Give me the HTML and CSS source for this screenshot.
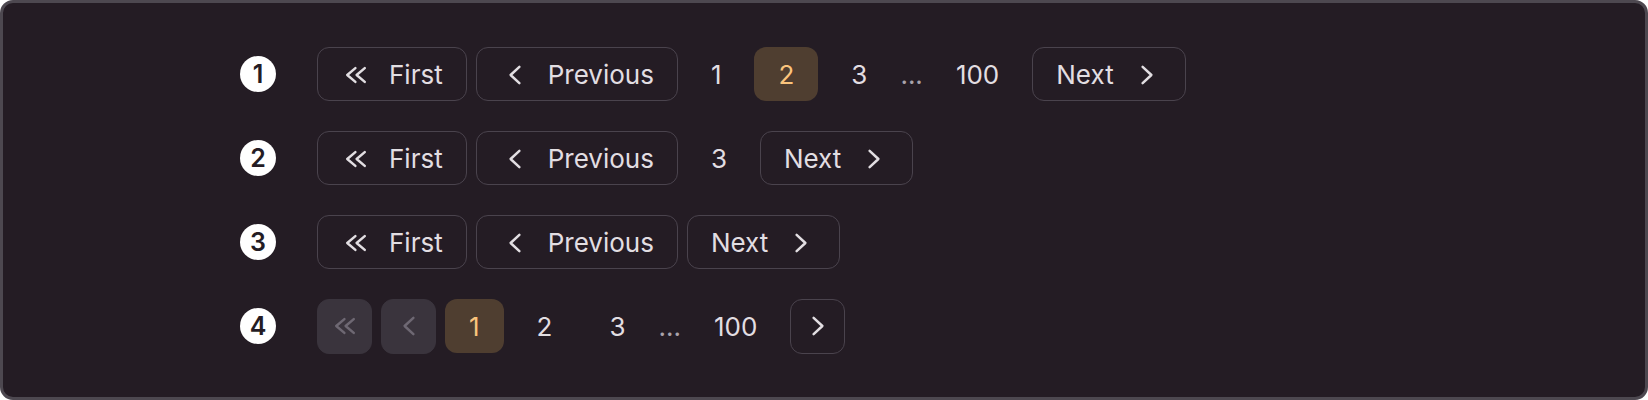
FILE: index.html
```html
<!DOCTYPE html>
<html lang="en">
<head>
<meta charset="utf-8">
<title>Pagination</title>
<link rel="stylesheet" href="styles.css">
</head>
<body>
<div class="frame">
  <div class="row">
    <span class="badge">1</span>
    <nav class="pager">
      <button class="btn"><svg class="ico" viewBox="0 0 24 24"><path d="M11.5 6.5l-6.5 5.5 6.5 5.5M19 6.5l-6.5 5.5 6.5 5.5"/></svg><span>First</span></button>
      <button class="btn"><svg class="ico" viewBox="0 0 24 24"><path d="M15.5 5.5l-7 6.5 7 6.5"/></svg><span>Previous</span></button>
      <span class="page">1</span>
      <span class="page active">2</span>
      <span class="page">3</span>
      <span class="dots">...</span>
      <span class="page">100</span>
      <button class="btn"><span>Next</span><svg class="ico" viewBox="0 0 24 24"><path d="M8.5 5.5l7 6.5-7 6.5"/></svg></button>
    </nav>
  </div>
  <div class="row">
    <span class="badge">2</span>
    <nav class="pager">
      <button class="btn"><svg class="ico" viewBox="0 0 24 24"><path d="M11.5 6.5l-6.5 5.5 6.5 5.5M19 6.5l-6.5 5.5 6.5 5.5"/></svg><span>First</span></button>
      <button class="btn"><svg class="ico" viewBox="0 0 24 24"><path d="M15.5 5.5l-7 6.5 7 6.5"/></svg><span>Previous</span></button>
      <span class="page">3</span>
      <button class="btn"><span>Next</span><svg class="ico" viewBox="0 0 24 24"><path d="M8.5 5.5l7 6.5-7 6.5"/></svg></button>
    </nav>
  </div>
  <div class="row">
    <span class="badge">3</span>
    <nav class="pager">
      <button class="btn"><svg class="ico" viewBox="0 0 24 24"><path d="M11.5 6.5l-6.5 5.5 6.5 5.5M19 6.5l-6.5 5.5 6.5 5.5"/></svg><span>First</span></button>
      <button class="btn"><svg class="ico" viewBox="0 0 24 24"><path d="M15.5 5.5l-7 6.5 7 6.5"/></svg><span>Previous</span></button>
      <button class="btn"><span>Next</span><svg class="ico" viewBox="0 0 24 24"><path d="M8.5 5.5l7 6.5-7 6.5"/></svg></button>
    </nav>
  </div>
  <div class="row">
    <span class="badge">4</span>
    <nav class="pager">
      <button class="btn icon disabled"><svg class="ico" viewBox="0 0 24 24"><path d="M11.5 6.5l-6.5 5.5 6.5 5.5M19 6.5l-6.5 5.5 6.5 5.5"/></svg></button>
      <button class="btn icon disabled"><svg class="ico" viewBox="0 0 24 24"><path d="M15.5 5.5l-7 6.5 7 6.5"/></svg></button>
      <span class="page active">1</span>
      <span class="page">2</span>
      <span class="page">3</span>
      <span class="dots">...</span>
      <span class="page">100</span>
      <button class="btn icon"><svg class="ico" viewBox="0 0 24 24"><path d="M8.5 5.5l7 6.5-7 6.5"/></svg></button>
    </nav>
  </div>
</div>
</body>
</html>
```
FILE: styles.css
```css
* { box-sizing: border-box; }
html, body { margin: 0; padding: 0; background: #ffffff; }
body { font-family: Inter, "Noto Sans", sans-serif; }

.frame {
  width: 1648px;
  height: 400px;
  background: #241c24;
  border: 3px solid #4d4850;
  border-radius: 13px;
  display: flex;
  flex-direction: column;
  justify-content: center;
  gap: 30px;
  padding-left: 237px;
}

.row {
  display: flex;
  align-items: center;
  height: 54px;
}

.badge {
  width: 36px;
  height: 36px;
  border-radius: 50%;
  background: #ffffff;
  color: #241c24;
  font-weight: 600;
  font-size: 25px;
  display: flex;
  align-items: center;
  justify-content: center;
  margin-right: 41px;
  flex: none;
}

.pager {
  display: flex;
  align-items: center;
  gap: 9px;
}

.btn {
  height: 54px;
  display: flex;
  align-items: center;
  gap: 18px;
  padding: 1px 23px 0;
  border: 1.5px solid #4a434d;
  border-radius: 12px;
  background: transparent;
  color: #e2dee2;
  font-family: inherit;
  font-size: 26px;
  font-weight: 400;
  line-height: 1;
  cursor: pointer;
}

.btn.icon {
  width: 55px;
  height: 55px;
  padding: 0;
  justify-content: center;
}

.btn.disabled {
  background: #3a343d;
  border-color: #3a343d;
  color: #6e6873;
}

.ico {
  width: 30px;
  height: 30px;
  flex: none;
  fill: none;
  stroke: currentColor;
  stroke-width: 2;
  stroke-linecap: round;
  stroke-linejoin: round;
}

.page {
  height: 54px;
  padding: 1px 24px 0;
  display: flex;
  align-items: center;
  border-radius: 12px;
  color: #e2dee2;
  font-size: 26px;
}

.page.active {
  background: #4f3e30;
  color: #fbc47c;
}

.dots {
  height: 54px;
  padding-top: 1px;
  display: flex;
  align-items: center;
  color: #a9a3ab;
  font-size: 26px;
}
```
